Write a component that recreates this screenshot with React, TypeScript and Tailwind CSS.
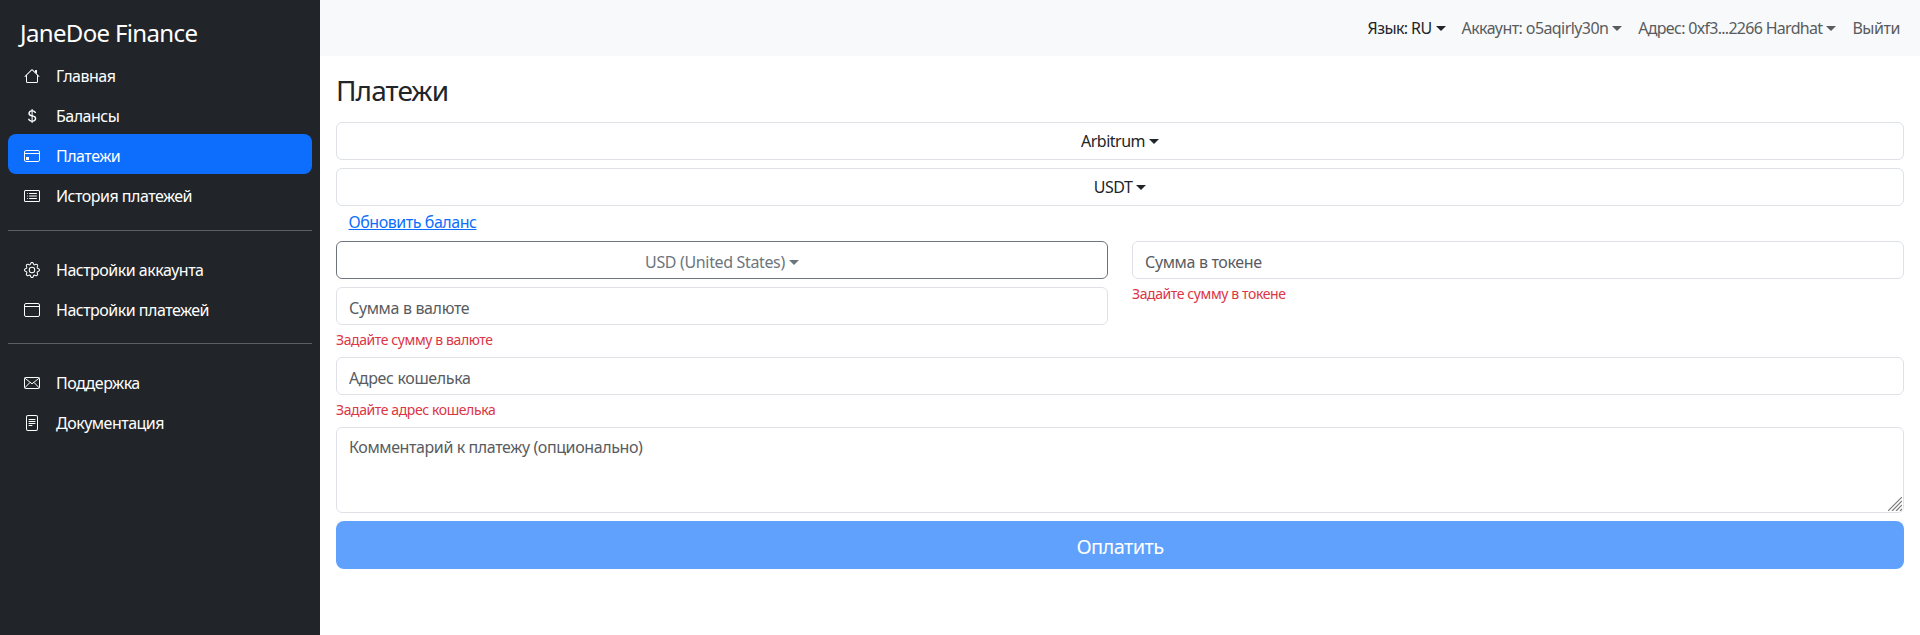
import type { ReactNode } from "react";
import { BsCurrencyDollar, BsCardList, BsGear, BsFileText } from "react-icons/bs";

function HouseIcon() {
  return (
    <svg width="16" height="16" viewBox="0 0 16 16" fill="currentColor">
      <path d="M2 13.5V7h1v6.5a.5.5 0 0 0 .5.5h9a.5.5 0 0 0 .5-.5V7h1v6.5a1.5 1.5 0 0 1-1.5 1.5h-9A1.5 1.5 0 0 1 2 13.5zm11-11V6l-2-2V2.5a.5.5 0 0 1 .5-.5h1a.5.5 0 0 1 .5.5z" />
      <path d="M7.293 1.5a1 1 0 0 1 1.414 0l6.647 6.646a.5.5 0 0 1-.708.708L8 2.207 1.354 8.854a.5.5 0 1 1-.708-.708L7.293 1.5z" />
    </svg>
  );
}

function CardIcon() {
  return (
    <svg width="16" height="16" viewBox="0 0 16 16" fill="none" stroke="currentColor">
      <rect x="0.5" y="2.5" width="15" height="11" rx="1.5" />
      <path d="M0.5 5.5h15" />
      <rect x="2" y="9" width="3" height="3" fill="currentColor" stroke="none" />
    </svg>
  );
}

function WindowIcon() {
  return (
    <svg width="16" height="16" viewBox="0 0 16 16" fill="none" stroke="currentColor">
      <rect x="0.5" y="1.5" width="15" height="13" rx="1.5" />
      <path d="M0.5 4.5h15" />
    </svg>
  );
}

function EnvelopeIcon() {
  return (
    <svg width="16" height="16" viewBox="0 0 16 16" fill="none" stroke="currentColor">
      <rect x="0.5" y="2.5" width="15" height="11" rx="1" />
      <path d="M0.7 3 8 8.8 15.3 3M0.7 13 6 7.4M15.3 13 10 7.4" />
    </svg>
  );
}

function Caret({ className = "" }: { className?: string }) {
  return (
    <span
      className={`inline-block ml-1 align-[3px] border-t-[5px] border-x-[5px] border-b-0 border-x-transparent border-t-current ${className}`}
    />
  );
}

function NavItem({
  icon,
  label,
  active = false,
  first = false,
}: {
  icon: ReactNode;
  label: string;
  active?: boolean;
  first?: boolean;
}) {
  return (
    <a
      className={`flex items-center h-10 px-4 rounded-lg text-white tracking-[-0.5px] ${
        first ? "pt-[3px]" : "pt-px"
      } ${active ? "bg-[#0d6efd]" : ""}`}
    >
      <span className="w-4 h-4 mr-4 flex items-center justify-center text-base">{icon}</span>
      {label}
    </a>
  );
}

function Divider({ className = "" }: { className?: string }) {
  return <div className={`h-px bg-[#5c5f63] ${className}`} />;
}

function Field({ placeholder, error }: { placeholder: string; error?: string }) {
  return (
    <div>
      <input
        placeholder={placeholder}
        className="block w-full h-[38px] px-3 pt-1 border border-[#dee2e6] rounded-md bg-white text-[#212529] placeholder:text-[#595c5f] outline-none"
      />
      {error && <div className="mt-1 text-[14px] leading-[21px] text-[#dc3545] tracking-[-0.4px]">{error}</div>}
    </div>
  );
}

function SelectButton({ label }: { label: string }) {
  return (
    <button className="block w-full h-[38px] border border-[#dee2e6] rounded-md bg-white text-[#212529] tracking-[-0.5px]">
      {label}
      <Caret />
    </button>
  );
}

export default function App() {
  return (
    <div className="flex min-h-[635px] bg-white text-[#212529] font-['Noto_Sans',sans-serif] text-base tracking-[-0.35px]">
      {/* Sidebar */}
      <aside className="w-[320px] shrink-0 bg-[#212529] px-2">
        <div className="pl-3 pt-[15px] h-[54px] text-white text-2xl leading-9 tracking-[-0.65px]">JaneDoe Finance</div>
        <NavItem first icon={<HouseIcon />} label="Главная" />
        <NavItem first icon={<BsCurrencyDollar />} label="Балансы" />
        <NavItem first icon={<CardIcon />} label="Платежи" active />
        <NavItem first icon={<BsCardList />} label="История платежей" />
        <Divider className="mt-4 mb-[18px]" />
        <NavItem icon={<BsGear />} label="Настройки аккаунта" />
        <NavItem icon={<WindowIcon />} label="Настройки платежей" />
        <Divider className="mt-[14px] mb-[18px]" />
        <NavItem icon={<EnvelopeIcon />} label="Поддержка" />
        <NavItem icon={<BsFileText />} label="Документация" />
      </aside>

      <div className="flex-1 min-w-0">
        {/* Top bar */}
        <header className="h-14 bg-[#f8f9fa] flex items-center justify-end gap-4 pr-5 text-[#595c5f] tracking-[-0.45px]">
          <span className="text-[#212529] tracking-[-0.6px]">
            Язык: RU
            <Caret />
          </span>
          <span className="tracking-[-0.58px]">
            Аккаунт: o5aqirly30n
            <Caret />
          </span>
          <span className="tracking-[-0.7px]">
            Адрес: 0xf3...2266 Hardhat
            <Caret />
          </span>
          <span>Выйти</span>
        </header>

        {/* Payment form */}
        <main className="px-4 pt-[17px]">
          <h3 className="text-[28px] leading-[34px] mb-[15px] tracking-[-0.9px]">Платежи</h3>
          <div className="flex flex-col gap-2">
            <SelectButton label="Arbitrum" />
            <SelectButton label="USDT" />
          </div>
          <a className="block pl-[12.5px] mt-[4px] h-6 leading-6 text-[#0d6efd] underline tracking-[-0.45px]">
            Обновить баланс
          </a>
          <div className="grid grid-cols-2 gap-x-6 mt-[7px]">
            <div className="flex flex-col gap-2">
              <button className="block w-full h-[38px] pt-1 border border-[#6c757d] rounded-md bg-white text-[#6c757d]">
                USD (United States)
                <Caret />
              </button>
              <Field placeholder="Сумма в валюте" error="Задайте сумму в валюте" />
            </div>
            <Field placeholder="Сумма в токене" error="Задайте сумму в токене" />
          </div>
          <div className="mt-[7px]">
            <Field placeholder="Адрес кошелька" error="Задайте адрес кошелька" />
          </div>
          <div className="relative mt-[7px]">
            <textarea
              placeholder="Комментарий к платежу (опционально)"
              className="block w-full h-[86px] px-3 pt-[7px] pb-[6px] border border-[#dee2e6] rounded-md bg-white placeholder:text-[#595c5f] outline-none resize-none tracking-[-0.4px]"
            />
            {/* resize grip */}
            <svg className="absolute right-[2px] bottom-[2px]" width="14" height="14" viewBox="0 0 14 14" stroke="#7d7d7d" strokeWidth="1.2">
              <path d="M0 14 14 0M4 14 14 4M8 14 14 8M12 14 14 12" />
            </svg>
          </div>
          <button className="block w-full h-12 mt-2 pt-1 rounded-lg bg-[#60a1fe] text-white text-xl tracking-[-0.6px]">
            Оплатить
          </button>
        </main>
      </div>
    </div>
  );
}
